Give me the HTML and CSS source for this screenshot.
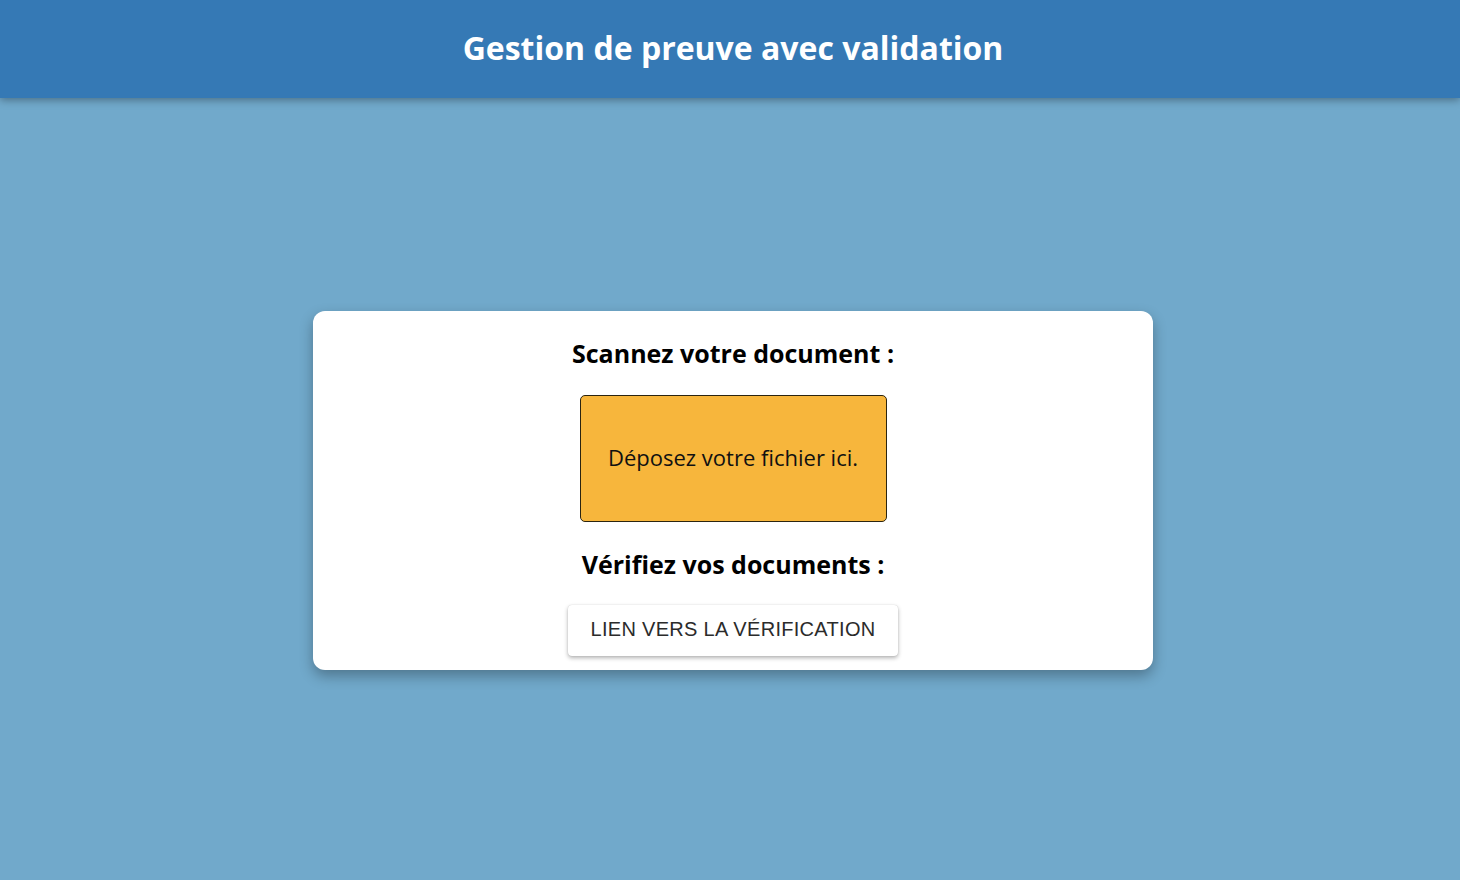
FILE: index.html
```html
<!DOCTYPE html>
<html lang="fr">
<head>
<meta charset="utf-8">
<title>Gestion de preuve avec validation</title>
<link rel="stylesheet" href="styles.css">
</head>
<body>
<header class="topbar">
  <h1 class="topbar-title">Gestion de preuve avec validation</h1>
</header>
<main class="main">
  <section class="card">
    <h2 class="card-heading">Scannez votre document :</h2>
    <div class="dropzone">Déposez votre fichier ici.</div>
    <h2 class="card-heading card-heading-second">Vérifiez vos documents :</h2>
    <a class="link-button" href="#">Lien vers la vérification</a>
  </section>
</main>
</body>
</html>
```
FILE: styles.css
```css
html, body {
  margin: 0;
  padding: 0;
  height: 100%;
}
body {
  background: #71a9cb;
  font-family: "Open Sans", "Noto Sans", sans-serif;
  display: flex;
  flex-direction: column;
  min-height: 880px;
}
.topbar {
  height: 98px;
  background: #3579b5;
  box-shadow: 0 2px 8px rgba(0, 0, 0, 0.35);
  display: flex;
  align-items: center;
  justify-content: center;
  padding-left: 6px;
  position: relative;
  z-index: 1;
  flex-shrink: 0;
}
.topbar-title {
  margin: 0 0 4px 0;
  color: #fff;
  font-size: 32px;
  font-weight: 700;
  letter-spacing: 0;
}
.main {
  flex: 1;
  display: flex;
  align-items: center;
  justify-content: center;
  padding: 3px 0 0 6px;
}
.card {
  width: 840px;
  box-sizing: border-box;
  background: #fff;
  border-radius: 12px;
  box-shadow: 0 6px 14px rgba(0, 0, 0, 0.3);
  display: flex;
  flex-direction: column;
  align-items: center;
  padding: 26px 0 14px;
}
.card-heading {
  margin: 0;
  font-size: 25px;
  font-weight: 700;
  color: #000;
  line-height: 32px;
}
.card-heading-second {
  margin-top: 26px;
}
.dropzone {
  margin-top: 26px;
  width: 307px;
  height: 127px;
  box-sizing: border-box;
  background: #f7b63c;
  border: 1px solid #2b2410;
  border-radius: 5px;
  display: flex;
  align-items: center;
  justify-content: center;
  padding-bottom: 3px;
  font-size: 22px;
  color: #111;
}
.link-button {
  margin-top: 25px;
  width: 330px;
  height: 51px;
  box-sizing: border-box;
  background: #fff;
  border-radius: 4px;
  box-shadow: 0 2px 4px rgba(0, 0, 0, 0.3), 0 0 1px rgba(0, 0, 0, 0.2);
  display: flex;
  align-items: center;
  justify-content: center;
  padding-bottom: 3px;
  font-family: "Liberation Sans", Arial, sans-serif;
  font-size: 20px;
  letter-spacing: 0.3px;
  text-transform: uppercase;
  color: #2b2b2b;
  text-decoration: none;
}
```
